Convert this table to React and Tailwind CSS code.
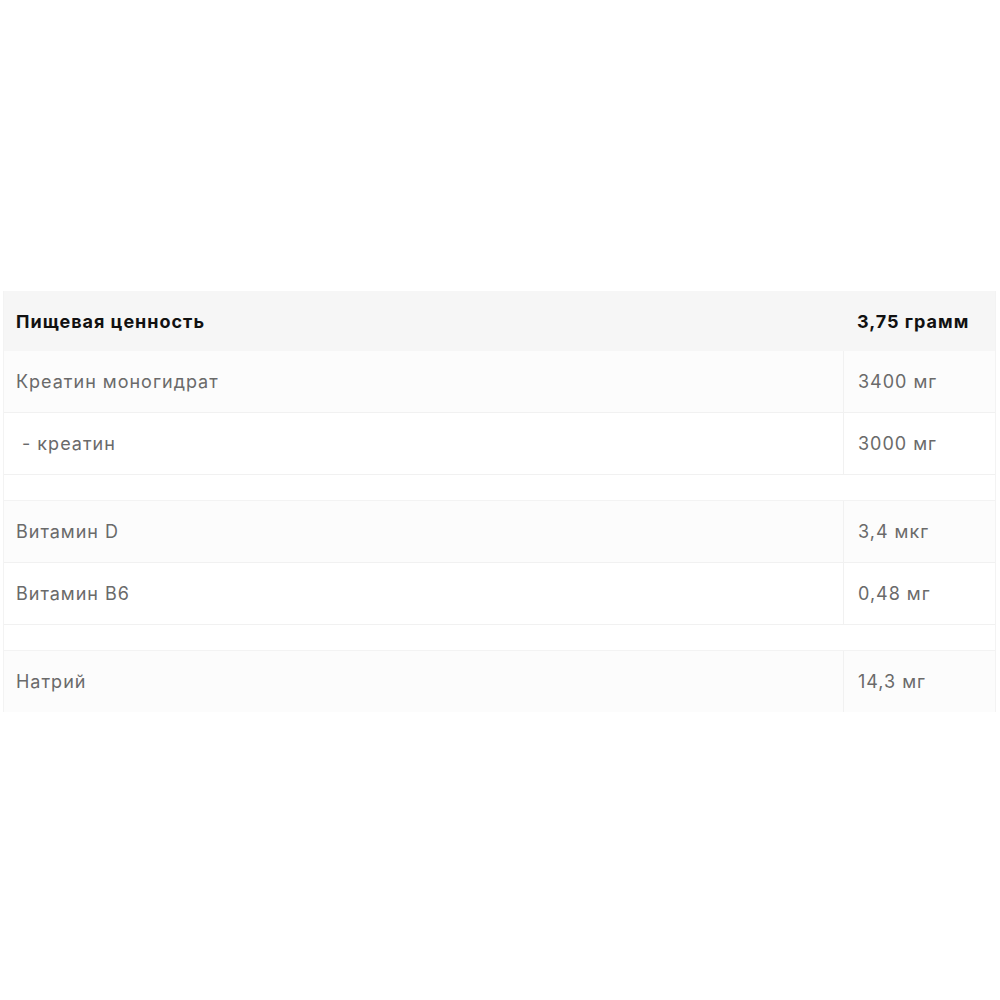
const groups = [
  [
    { name: 'Креатин моногидрат', value: '3400 мг', bg: 'bg-[#fcfcfc]' },
    { name: '\u00a0- креатин', value: '3000 мг', bg: 'bg-white' },
  ],
  [
    { name: 'Витамин D', value: '3,4 мкг', bg: 'bg-[#fcfcfc]' },
    { name: 'Витамин B6', value: '0,48 мг', bg: 'bg-white' },
  ],
  [{ name: 'Натрий', value: '14,3 мг', bg: 'bg-[#fcfcfc]' }],
];

const Row = ({ name, value, bg, className = '' }) => (
  <div className={`flex ${bg} ${className}`}>
    <div className="flex h-[61px] flex-1 items-center px-[12px]">{name}</div>
    <div className="flex h-[61px] w-[152px] items-center border-l border-[#f1f1f1] px-[14px]">{value}</div>
  </div>
);

const App = () => {
  return (
    <div className="min-h-[1000px] bg-white pt-[291px] pl-[3px] pr-[4px] font-['Inter','Open_Sans',sans-serif] text-[18px] tracking-[0.055em] text-[#6a6a6a]">
      <div className="border-l border-r border-[#f3f3f3]">
        <div className="flex bg-[#f6f6f6] font-bold text-[#111]">
          <div className="flex h-[60px] flex-1 items-center px-[12px]">Пищевая ценность</div>
          <div className="flex h-[60px] w-[152px] items-center px-[14px]">3,75 грамм</div>
        </div>
        {groups.map((rows, gi) => (
          <div key={gi} className={gi > 0 ? 'mt-[25px] border-t border-[#f3f3f3]' : ''}>
            {rows.map((row, ri) => (
              <Row
                key={row.name}
                {...row}
                className={ri < rows.length - 1 || gi < groups.length - 1 ? 'border-b border-[#f1f1f1]' : ''}
              />
            ))}
          </div>
        ))}
      </div>
    </div>
  );
};

export default App;
